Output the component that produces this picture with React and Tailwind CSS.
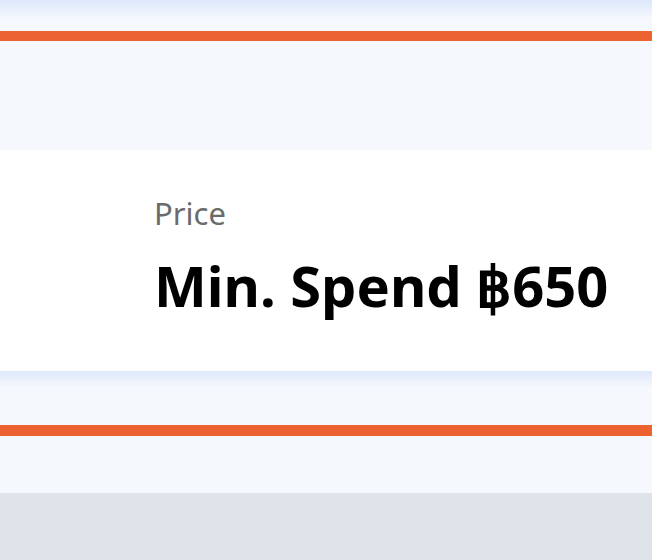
export default function App() {
    return (
        <div className="min-h-screen bg-[#dfe3ea] font-['Noto_Sans',sans-serif]">

            {/* TOP BAND */}
            <div className="h-[150px] bg-[#f5f8fd] flex flex-col">
                <div className="h-[31px] bg-gradient-to-b from-[#dde8fb] to-[#f5f8fd] to-60%"></div>
                <div className="h-[10px] bg-[#ec6331]"></div>
            </div>

            {/* PRICE CARD */}
            <div className="h-[221px] bg-white pl-[154px] pt-[48px]">
                <p className="text-[31px] leading-none text-[#6b6b6b]">Price</p>
                <p className="mt-[28px] text-[56px] leading-none font-bold text-black">
                    Min. Spend ฿650
                </p>
            </div>

            {/* BOTTOM BAND */}
            <div className="h-[122px] bg-[#f5f8fd] flex flex-col">
                <div className="h-[54px] bg-gradient-to-b from-[#dde8fb] to-[#f5f8fd] to-30%"></div>
                <div className="h-[11px] bg-[#ec6331]"></div>
            </div>
        </div>
    );
}
